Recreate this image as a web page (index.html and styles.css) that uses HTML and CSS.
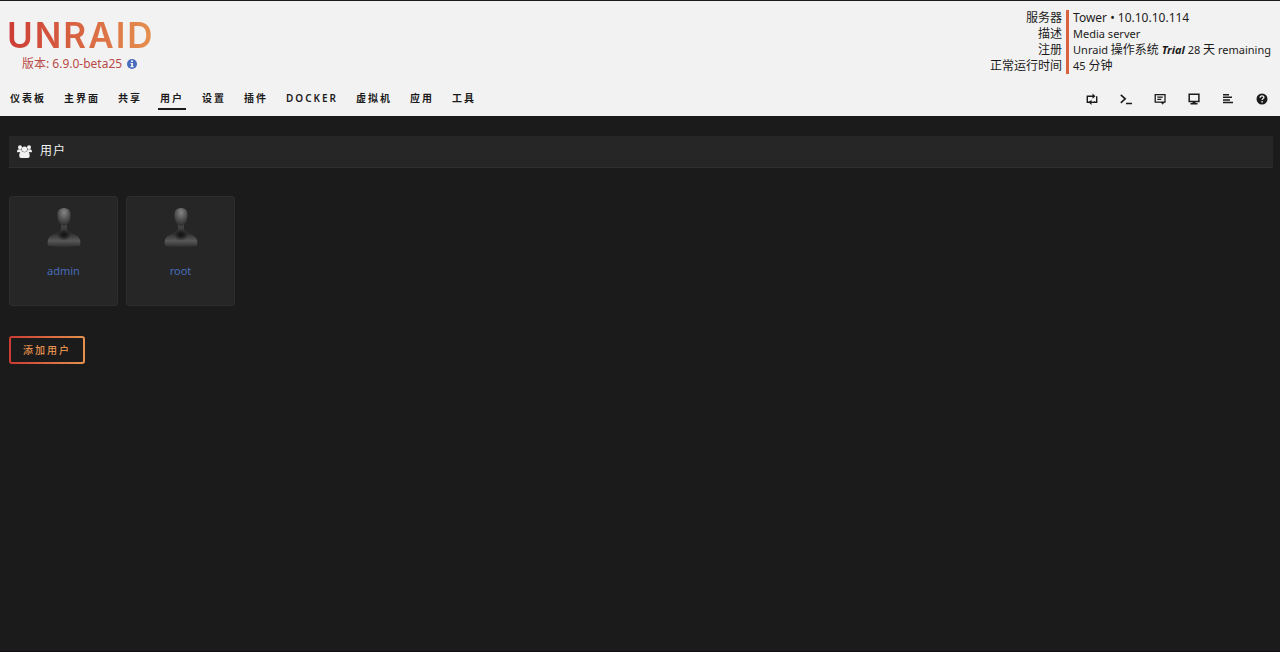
FILE: index.html
```html
<!DOCTYPE html>
<html lang="zh-CN">
<head>
<meta charset="utf-8">
<meta name="viewport" content="width=device-width, initial-scale=1">
<title>Tower/Users</title>
<link rel="stylesheet" href="styles.css">
</head>
<body>
<header class="header">
  <div class="banner">
    <div class="brand">
      <a class="logo" href="#">UNRAID</a>
      <div class="version">版本: 6.9.0-beta25
        <a class="version-info" href="#" aria-label="info"><svg width="10" height="10" viewBox="0 0 10 10"><circle cx="5" cy="5" r="5" fill="#486dba"/><path d="M4 1.5h2v1.5H4zM3.5 4H6v3.2h.7v1H3.4v-1h.8V5h-.7z" fill="#f2f2f2"/></svg></a>
      </div>
    </div>
    <div class="server">
      <div class="server-labels">
        <span>服务器</span><span>描述</span><span>注册</span><span>正常运行时间</span>
      </div>
      <div class="server-values">
        <span class="address">Tower • 10.10.10.114</span><span>Media server</span><span>Unraid <span class="han">操作系统</span> <em class="trial">Trial</em> 28 <span class="han">天</span> remaining</span><span>45 <span class="han">分钟</span></span>
      </div>
    </div>
  </div>
  <div class="menu">
    <nav class="tabs">
      <a class="tab" href="#">仪表板</a>
      <a class="tab" href="#">主界面</a>
      <a class="tab" href="#">共享</a>
      <a class="tab active" href="#">用户</a>
      <a class="tab" href="#">设置</a>
      <a class="tab" href="#">插件</a>
      <a class="tab" href="#">DOCKER</a>
      <a class="tab" href="#">虚拟机</a>
      <a class="tab" href="#">应用</a>
      <a class="tab" href="#">工具</a>
    </nav>
    <div class="tools">
      <button class="tool" type="button" aria-label="switch"><svg viewBox="0 0 12 12"><path d="M4 9.300H1.300V3.300H7.500M8 9.300H10.700V3.300" fill="none" stroke="#1c1b1b" stroke-width="1.400"/><path d="M6.500 .6L9.500 3.300 6.500 5.800zM5.500 6.800L2.500 9.300l3 2.600z" fill="#1c1b1b"/><path d="M5 9.300h4" stroke="#1c1b1b" stroke-width="1.400"/></svg></button>
      <button class="tool" type="button" aria-label="terminal"><svg viewBox="0 0 12 12"><path d="M.8 1.800L5.200 5.800.8 9.800M6 10.500h6" fill="none" stroke="#1c1b1b" stroke-width="1.600"/></svg></button>
      <button class="tool" type="button" aria-label="feedback"><svg viewBox="0 0 12 12"><path d="M1.200 1.700h9.800v7.500H1.200zM3.300 4.200h5.500M3.300 6.400h4" fill="none" stroke="#1c1b1b" stroke-width="1.300"/><path d="M6.500 9h4L8.800 11.700z" fill="#1c1b1b"/></svg></button>
      <button class="tool" type="button" aria-label="info"><svg viewBox="0 0 12 12"><path d="M1.200 1.200h9.700v7.300H1.200z" fill="none" stroke="#1c1b1b" stroke-width="1.500"/><path d="M2.500 10h1.800l.7-1.500h2L7.700 10h1.800v1.600h-7z" fill="#1c1b1b"/></svg></button>
      <button class="tool" type="button" aria-label="log"><svg viewBox="0 0 12 12"><path d="M1 1.700h6M1 4.300h9M1 6.900h7M1 9.500h10" fill="none" stroke="#1c1b1b" stroke-width="1.500"/></svg></button>
      <button class="tool" type="button" aria-label="help"><svg viewBox="0 0 12 12"><circle cx="6" cy="6" r="5.500" fill="#1c1b1b"/><path d="M4.100 4.700C4.100 2.300 8 2.400 7.900 4.500 7.900 5.600 6.200 5.600 6.100 7" fill="none" stroke="#f2f2f2" stroke-width="1.300"/><path d="M5.400 8h1.400v1.400H5.400z" fill="#f2f2f2"/></svg></button>
    </div>
  </div>
</header>
<main class="content">
  <h1 class="title">
    <svg width="15" height="13" viewBox="0 0 15 13" fill="#f2f2f2"><circle cx="3" cy="2.300" r="2"/><circle cx="12" cy="2.300" r="2"/><path d="M0 7.200C0 4 1.500 4 4.500 4.500L5 7zM15 7.200C15 4 13.500 4 10.500 4.500L10 7z"/><circle cx="7.500" cy="4.200" r="2.700"/><path d="M2.300 11C2.300 7.500 3.500 6.500 5 6.300c1.500 1.200 3.500 1.200 5 0 1.500.2 2.700 1.200 2.700 4.700 0 1.300-.7 2-2 2H4.300c-1.300 0-2-.7-2-2z"/></svg>
    用户
  </h1>
  <div class="users">
    <a class="user" href="#">
      <svg class="avatar" viewBox="0 0 36 42"><defs><radialGradient id="head" cx=".5" cy=".25" r=".7"><stop offset="0" stop-color="#858585"/><stop offset=".6" stop-color="#505050"/><stop offset="1" stop-color="#303030"/></radialGradient><linearGradient id="body" x1="0" y1="0" x2="0" y2="1"><stop offset="0" stop-color="#4b4b4b"/><stop offset=".45" stop-color="#303030"/><stop offset=".75" stop-color="#585858"/><stop offset="1" stop-color="#303030"/></linearGradient><radialGradient id="neck"><stop offset="0" stop-color="#101010"/><stop offset="1" stop-color="#101010" stop-opacity="0"/></radialGradient></defs><path d="M15 16h6v6c0 4 12 5 13 11 .7 3 .5 5-.5 6-7 1-24 1-31 0C1.500 38 1.300 36 2 33c1-6 13-7 13-11z" fill="url(#body)"/><ellipse cx="18" cy="28" rx="7" ry="6" fill="url(#neck)"/><path d="M18 1c5 0 7 3.500 6.500 8.500C24 15 21 19 18 19s-6-4-6.500-9.500C11 4.500 13 1 18 1z" fill="url(#head)"/></svg>
      <span>admin</span>
    </a>
    <a class="user" href="#">
      <svg class="avatar" viewBox="0 0 36 42"><path d="M15 16h6v6c0 4 12 5 13 11 .7 3 .5 5-.5 6-7 1-24 1-31 0C1.500 38 1.300 36 2 33c1-6 13-7 13-11z" fill="url(#body)"/><ellipse cx="18" cy="28" rx="7" ry="6" fill="url(#neck)"/><path d="M18 1c5 0 7 3.500 6.500 8.500C24 15 21 19 18 19s-6-4-6.500-9.500C11 4.500 13 1 18 1z" fill="url(#head)"/></svg>
      <span>root</span>
    </a>
  </div>
  <button class="add" type="button"><span>添加用户</span></button>
</main>
</body>
</html>
```
FILE: styles.css
```css
* {
  box-sizing: border-box;
}

body {
  margin: 0;
  min-height: 100vh;
  background: #1c1b1b;
  border-bottom: 1px solid #120c10;
  color: #f2f2f2;
  font-family: "Noto Sans", "Noto Sans CJK SC", sans-serif;
  font-size: 11px;
  line-height: 16px;
}

a {
  color: inherit;
  text-decoration: none;
}

button {
  padding: 0;
  border: 0;
  background: none;
  font: inherit;
  cursor: pointer;
}

.header {
  border-top: 1px solid #1c1b1b;
  background: #f2f2f2;
  color: #1c1b1b;
}

.banner {
  display: flex;
  justify-content: space-between;
  padding: 9px 9px 0 7px;
}

.brand {
  display: flex;
  flex-direction: column;
  align-items: flex-start;
  padding-top: 4px;
}

.logo {
  background: linear-gradient(90deg, #cc3c35, #e5914e);
  background-clip: text;
  -webkit-background-clip: text;
  color: transparent;
  font-family: Inter, sans-serif;
  font-size: 35px;
  font-weight: 600;
  line-height: 42px;
  letter-spacing: 2px;
}

.version {
  display: flex;
  align-items: center;
  gap: 5px;
  padding-left: 15px;
  color: #b94a45;
  font-size: 12px;
}

.version-info {
  display: flex;
}

.server {
  display: flex;
}

.server-labels,
.server-values {
  display: flex;
  flex-direction: column;
}

.server-labels {
  align-items: flex-end;
  padding-right: 4px;
  border-right: 3px solid #d9633f;
  font-size: 12px;
}

.server-values {
  padding-left: 4px;
}

.address,
.han {
  font-size: 12px;
}

.trial {
  font-weight: 700;
}

.menu {
  display: flex;
  justify-content: space-between;
  padding: 16px 12px 6px 8px;
}

.tabs {
  display: flex;
  gap: 14px;
}

.tab {
  padding: 0 2px 2px;
  border-bottom: 2px solid transparent;
  font-size: 10px;
  font-weight: 600;
  line-height: 16px;
  letter-spacing: 2px;
}

.tab.active {
  border-bottom-color: #1c1b1b;
}

.tools {
  display: flex;
  align-items: flex-start;
  gap: 22px;
  padding-top: 3px;
}

.tool {
  display: flex;
}

.tool svg {
  width: 12px;
  height: 12px;
}

.content {
  padding: 20px 7px 20px 9px;
}

.title {
  display: flex;
  align-items: center;
  gap: 8px;
  margin: 0 0 28px;
  padding: 7px 8px 8px;
  border-bottom: 1px solid #2f2f2f;
  background: #262626;
  font-size: 12px;
  font-weight: 400;
  letter-spacing: 1px;
}

.users {
  display: flex;
  gap: 8px;
  margin-bottom: 30px;
}

.user {
  display: flex;
  flex-direction: column;
  align-items: center;
  gap: 14px;
  width: 109px;
  padding: 10px 0 26px;
  border: 1px solid #2d2d2d;
  border-radius: 3px;
  background: #262626;
  color: #486dba;
}

.avatar {
  width: 36px;
  height: 42px;
}

.add {
  padding: 2px;
  border-radius: 3px;
  background: linear-gradient(90deg, #cb3b33, #e5914e);
}

.add span {
  display: block;
  padding: 4px 12px;
  border-radius: 1px;
  background: #1c1b1b;
  color: #e5914e;
  font-size: 10px;
  font-weight: 500;
  letter-spacing: 2px;
}
```
